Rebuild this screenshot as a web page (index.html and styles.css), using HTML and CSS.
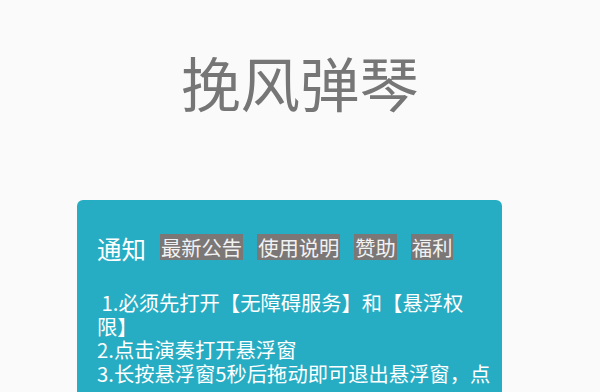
FILE: index.html
```html
<!DOCTYPE html>
<html lang="zh-CN">
<head>
<meta charset="utf-8">
<link rel="stylesheet" href="styles.css">
</head>
<body>
<h1 class="title">挽风弹琴</h1>
<div class="card">
  <div class="card-head">
    <span class="head-label">通知</span>
    <span class="tag">最新公告</span>
    <span class="tag">使用说明</span>
    <span class="tag">赞助</span>
    <span class="tag">福利</span>
  </div>
  <p class="notice"> 1.必须先打开【无障碍服务】和【悬浮权限】<br>2.点击演奏打开悬浮窗<br>3.长按悬浮窗5秒后拖动即可退出悬浮窗，点</p>
</div>
</body>
</html>
```
FILE: styles.css
```css
html, body {
  margin: 0;
  padding: 0;
}
body {
  background: #fafafa;
  width: 600px;
  height: 392px;
  overflow: hidden;
  font-family: "Noto Sans CJK SC", "Noto Sans", sans-serif;
}
.title {
  margin: 52px 0 0 0;
  font-size: 59.5px;
  line-height: 59px;
  font-weight: normal;
  text-align: center;
  color: #767676;
}
.card {
  margin: 89px 0 0 77px;
  width: 396px;
  padding: 32px 9px 24px 20px;
  background: #27adc3;
  border-radius: 6px;
}
.card-head {
  display: flex;
  align-items: center;
  height: 30px;
  gap: 14px;
}
.head-label {
  font-size: 24.5px;
  line-height: 30px;
  color: #ffffff;
  margin-top: 4px;
}
.tag {
  font-size: 20.3px;
  line-height: 26px;
  padding: 0 1px;
  background: #7b7777;
  color: #f2f2f2;
}
.notice {
  margin: 29px 0 0 0;
  font-size: 20.3px;
  line-height: 23.5px;
  color: #ffffff;
  white-space: pre-wrap;
}
```
